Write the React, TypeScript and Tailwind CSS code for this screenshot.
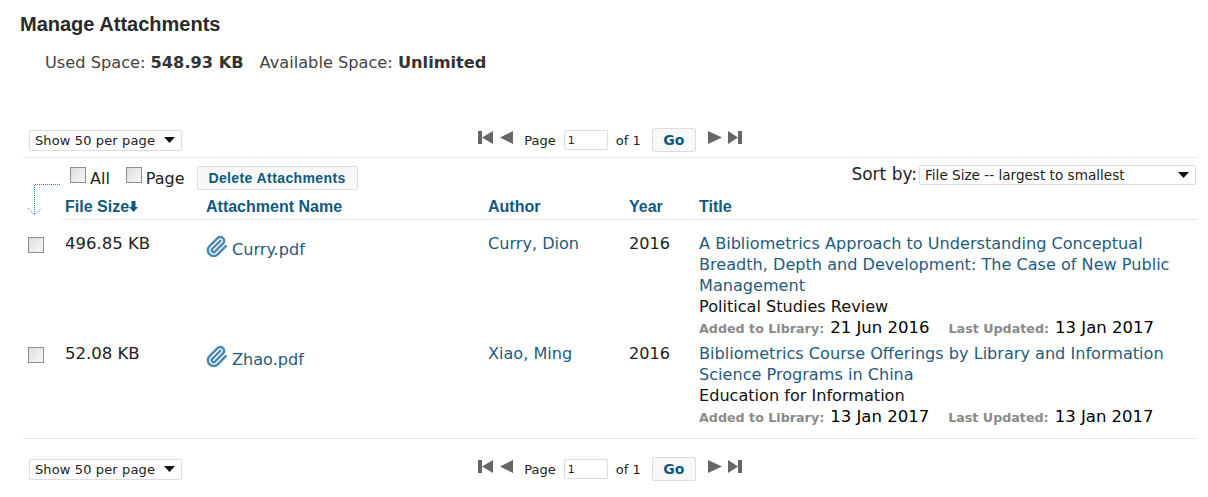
import { Paperclip } from "lucide-react"

function Triangle() {
  return (
    <svg width="11" height="6" viewBox="0 0 11 6" className="shrink-0">
      <path d="M0 0h11L5.5 6z" fill="#111" />
    </svg>
  )
}

function PagerIcon({ kind }: { kind: "first" | "prev" | "next" | "last" }) {
  const icons = {
    first: { w: 15, d: "M0 0h4v13H0zM4 6.5 15 0v13z" },
    prev: { w: 13, d: "M0 6.5 13 0v13z" },
    next: { w: 14, d: "M0 0l14 6.5L0 13z" },
    last: { w: 14, d: "M0 0l10 6.5L0 13zM10 0h4v13h-4z" },
  }
  const icon = icons[kind]
  return (
    <svg width={icon.w} height="13" viewBox={`0 0 ${icon.w} 13`} className="shrink-0">
      <path d={icon.d} fill="#666" />
    </svg>
  )
}

function Pager() {
  return (
    <div className="grid grid-cols-[1fr_auto_1fr] items-center pl-[6px]">
      <div className="flex h-[21px] w-[153px] items-center justify-between rounded-[2px] border border-[#ddd] bg-white pl-[5px] pr-[6px] text-[13px] tracking-[0.12px] text-[#222]">
        <span className="pt-[1px]">Show 50 per page</span>
        <Triangle />
      </div>
      <div className="flex items-center pr-[6px] text-[13px] text-[#222]">
        <div className="mb-[6px] flex gap-[7px]">
          <PagerIcon kind="first" />
          <PagerIcon kind="prev" />
        </div>
        <span className="ml-[11px] pt-[1px]">Page</span>
        <input
          readOnly
          value="1"
          className="ml-[8px] h-[20px] w-[44px] rounded-[2px] border border-[#ddd] pl-[3px] text-[11px] text-[#222]"
        />
        <span className="ml-[8px] pt-[1px]">of 1</span>
        <button className="ml-[11px] h-[24px] w-[44px] rounded-[2px] border border-[#ddd] bg-[#f8f8f8] text-[14px] font-bold text-[#0f5a80]">
          Go
        </button>
        <div className="mb-[6px] ml-[12px] flex gap-[6px]">
          <PagerIcon kind="next" />
          <PagerIcon kind="last" />
        </div>
      </div>
      <div />
    </div>
  )
}

function Check() {
  return (
    <input
      type="checkbox"
      className="m-0 h-[16px] w-[16px] shrink-0 appearance-none border border-[#8f8f8f] bg-linear-to-br from-[#dcdcdc] to-[#fafafa]"
    />
  )
}

const rows = [
  {
    size: "496.85 KB",
    file: "Curry.pdf",
    author: "Curry, Dion",
    year: "2016",
    title: "A Bibliometrics Approach to Understanding Conceptual Breadth, Depth and Development: The Case of New Public Management",
    journal: "Political Studies Review",
    added: "21 Jun 2016",
    updated: "13 Jan 2017",
  },
  {
    size: "52.08 KB",
    file: "Zhao.pdf",
    author: "Xiao, Ming",
    year: "2016",
    title: "Bibliometrics Course Offerings by Library and Information Science Programs in China",
    journal: "Education for Information",
    added: "13 Jan 2017",
    updated: "13 Jan 2017",
  },
]

export default function App() {
  return (
    <div className="h-[497px] w-[1208px] overflow-hidden bg-white font-['DejaVu_Sans',sans-serif] text-[16.1px] leading-[21px] text-black">
      <h1 className="pl-[20px] pt-[13px] font-['Liberation_Sans',sans-serif] text-[20px] font-bold leading-[22px] text-[#2a2a2a]">
        Manage Attachments
      </h1>
      <p className="pl-[45px] pt-[17px] text-[16.2px] text-[#444]">
        Used Space: <b className="text-[#333]">548.93 KB</b>
        <span className="ml-[16px]">Available Space: </span>
        <b className="text-[#333]">Unlimited</b>
      </p>

      <div className="ml-[23px] mr-[11px] mt-[55px]">
        <Pager />

        <div className="mt-[5px] flex h-[34px] items-start border-t border-[#e5e5e5] pl-[47px] pt-[8px]">
          <label className="mt-[1px] flex items-start gap-[4px] text-[16px] leading-[18px] text-[#222]">
            <Check />
            <span className="mt-[3px]">All</span>
          </label>
          <label className="ml-[16px] mt-[1px] flex items-start gap-[4px] text-[16px] leading-[18px] text-[#222]">
            <Check />
            <span className="mt-[3px]">Page</span>
          </label>
          <button className="ml-[12px] h-[24px] w-[161px] rounded-[2px] border border-[#ddd] bg-[#f8f8f8] font-['Liberation_Sans',sans-serif] text-[14px] font-bold tracking-[0.4px] text-[#0f5a80]">
            Delete Attachments
          </button>
          <div className="ml-auto mr-[1px] -mt-[2px] flex items-center gap-[2px]">
            <span className="text-[17px] text-[#222]">Sort by:</span>
            <div className="flex h-[20px] w-[277px] items-center justify-between rounded-[2px] border border-[#ddd] pl-[5px] pr-[6px] text-[13.6px] text-[#222]">
              <span className="pt-[1px]">File Size -- largest to smallest</span>
              <Triangle />
            </div>
          </div>
        </div>

        <div className="relative flex">
          <svg width="39" height="36" viewBox="0 0 39 36" className="absolute left-0 top-[-7px]">
            <path
              d="M37 .5H11.5V31M4.5 24l7 7 7-7"
              fill="none"
              stroke="#2f86ad"
              strokeWidth="1"
              strokeDasharray="1 1"
            />
          </svg>
          <div className="ml-[39px] grid flex-1 grid-cols-[144px_282px_141px_70px_1fr] items-center border-b border-[#e5e5e5] pb-[2px] pt-[5px] font-['Liberation_Sans',sans-serif] text-[16px] font-bold leading-[21px] text-[#0f5a80]">
            <div className="flex items-center pl-[3px]">
              File Size
              <svg width="9" height="11" viewBox="0 0 9 11">
                <path d="M2.5 0h4v6H9L4.5 11 0 6h2.5z" fill="#0f5a80" />
              </svg>
            </div>
            <div>Attachment Name</div>
            <div>Author</div>
            <div>Year</div>
            <div>Title</div>
          </div>
        </div>

        <div className="border-b border-[#e5e5e5] pb-[10px]">
          {rows.map((row, i) => (
            <div key={row.file} className={i === 0 ? "flex pt-[13px]" : "flex pt-[4px]"}>
              <div className="w-[39px] pl-[5px] pt-[4px]">
                <Check />
              </div>
              <div className="grid flex-1 grid-cols-[144px_282px_141px_70px_1fr]">
                <div className="pl-[3px] text-[16.5px] text-[#222]">{row.size}</div>
                <div className="flex items-start gap-[4px] text-[#1f5b80]">
                  <Paperclip size={23} strokeWidth={2.6} className="-ml-[1px] mt-[2px] shrink-0 text-[#4a8ab0]" />
                  <span className="pt-[6px]">{row.file}</span>
                </div>
                <div className="text-[#1f5b80]">{row.author}</div>
                <div className="text-[#222]">{row.year}</div>
                <div>
                  <div className="w-[480px] text-[#1f5b80]">{row.title}</div>
                  <div className="text-[#111]">{row.journal}</div>
                  <div className="flex items-baseline text-[16.5px]">
                    <b className="text-[12.7px] text-[#8a8a8a]">Added to Library:</b>
                    <span className="ml-[6px]">{row.added}</span>
                    <b className="ml-[19px] text-[12.7px] text-[#8a8a8a]">Last Updated:</b>
                    <span className="ml-[6px]">{row.updated}</span>
                  </div>
                </div>
              </div>
            </div>
          ))}
        </div>

        <div className="mt-[18px]">
          <Pager />
        </div>
      </div>
    </div>
  )
}
